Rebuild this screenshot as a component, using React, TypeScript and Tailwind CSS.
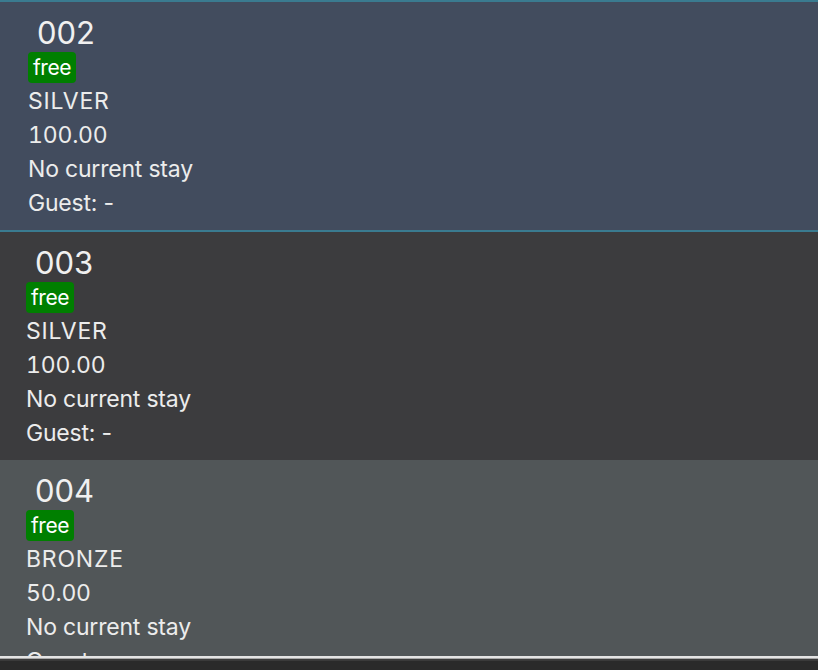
import React from "react";

type Room = { id: string; tier: string; price: string; selected?: boolean; bg: string };

const rooms: Room[] = [
  { id: "002", tier: "SILVER", price: "100.00", selected: true, bg: "bg-[#424c5e]" },
  { id: "003", tier: "SILVER", price: "100.00", bg: "bg-[#3c3c3e]" },
  { id: "004", tier: "BRONZE", price: "50.00", bg: "bg-[#515658]" },
];

function Cell({ r }: { r: Room }) {
  return (
    <div
      className={
        r.bg +
        " shrink-0 flex flex-col pt-[13px] pb-[10px] " +
        (r.selected ? "border-y-2 border-[#3a7b90] pl-[28px]" : "pl-[26px]")
      }
    >
      <div className="text-[31px] leading-[36px] pl-[9px] text-[#f0f0f0]">{r.id}</div>
      <div className="mt-[1px] flex">
        <span className="h-[31px] bg-[#007f00] rounded-[4px] px-[5px] text-[21px] leading-[31px] tracking-[-0.4px] text-white">
          free
        </span>
      </div>
      <div className="mt-[1px] text-[23px] leading-[34px] tracking-[-0.2px] text-[#ececec]">
        <div className="tracking-[0.8px]">{r.tier}</div>
        <div className="tabular-nums">{r.price}</div>
        <div>No current stay</div>
        <div>Guest: -</div>
      </div>
    </div>
  );
}

export default function App() {
  return (
    <div
      className="w-[818px] h-[670px] flex flex-col bg-[#2a2a2a] overflow-hidden"
      style={{ fontFamily: "Inter, 'Noto Sans', sans-serif" }}
    >
      <div className="h-[656px] shrink-0 overflow-hidden flex flex-col">
        {rooms.map((r) => (
          <Cell key={r.id} r={r} />
        ))}
      </div>
      <div className="h-[2px] shrink-0 bg-[#e4e4e4]" />
      <div className="h-[1px] shrink-0 bg-[#a8a8a8]" />
      <div className="h-[2px] shrink-0 bg-[#3a3a3a]" />
      <div className="flex-1 bg-[#2a2a2a]" />
    </div>
  );
}
